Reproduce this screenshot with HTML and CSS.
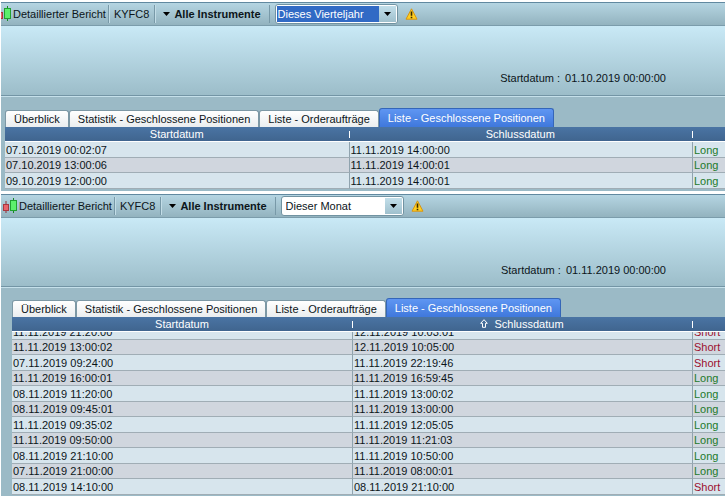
FILE: index.html
```html
<!DOCTYPE html>
<html lang="de">
<head>
<meta charset="utf-8">
<meta name="viewport" content="width=device-width, initial-scale=1">
<title>Detaillierter Bericht</title>
<link rel="stylesheet" href="styles.css">
</head>
<body>
<svg class="defs" aria-hidden="true">
  <symbol id="candles" viewBox="0 0 16 16">
    <path d="M4 3v12" stroke="#8c3038"/>
    <rect x="1.5" y="6.500" width="5" height="6" fill="#e8646c" stroke="#a83840"/>
    <path d="M11.500 0v15" stroke="#168a24"/>
    <rect x="8.500" y="2.500" width="6" height="10" fill="#5cf06c" stroke="#20a030"/>
  </symbol>
  <symbol id="caret" viewBox="0 0 7 4"><path d="M0 0h7L3.500 4z" fill="#000"/></symbol>
  <symbol id="warning" viewBox="0 0 12 12">
    <path d="M6 .8 11.500 11.200H.5z" fill="#ffcf20" stroke="#d89410" stroke-linejoin="round"/>
    <path d="M6 3.500v4.200M6 8.800v1.500" stroke="#3a2a00" stroke-width="1.600"/>
  </symbol>
  <symbol id="sort-up" viewBox="0 0 8 9"><path d="M4 .7 7.300 4.300H5.500v4h-3v-4H.7z" fill="none" stroke="#fff"/></symbol>
</svg>

<section class="report report-quarter">
  <header class="toolbar">
    <svg class="candles"><use href="#candles"/></svg>
    <span class="name">Detaillierter Bericht</span>
    <span class="account">KYFC8</span>
    <button class="instruments" type="button"><svg class="caret"><use href="#caret"/></svg>Alle Instrumente</button>
    <div class="period focused">
      <select aria-label="Zeitraum"><option>Dieses Vierteljahr</option><option>Dieser Monat</option></select>
      <span class="drop"><svg class="caret"><use href="#caret"/></svg></span>
    </div>
    <svg class="warning"><use href="#warning"/></svg>
  </header>
  <div class="info"><span>Startdatum :</span><span>01.10.2019 00:00:00</span></div>
  <div class="content">
    <nav class="tabs">
      <button type="button">Überblick</button>
      <button type="button">Statistik - Geschlossene Positionen</button>
      <button type="button">Liste - Orderaufträge</button>
      <button type="button" class="active">Liste - Geschlossene Positionen</button>
    </nav>
    <table>
      <thead><tr><th>Startdatum</th><th>Schlussdatum</th><th class="side"></th></tr></thead>
      <tbody>
        <tr><td>07.10.2019 00:02:07</td><td>11.11.2019 14:00:00</td><td class="long">Long</td></tr>
        <tr><td>07.10.2019 13:00:06</td><td>11.11.2019 14:00:01</td><td class="long">Long</td></tr>
        <tr><td>09.10.2019 12:00:00</td><td>11.11.2019 14:00:01</td><td class="long">Long</td></tr>
      </tbody>
    </table>
  </div>
</section>

<section class="report report-month">
  <header class="toolbar">
    <svg class="candles"><use href="#candles"/></svg>
    <span class="name">Detaillierter Bericht</span>
    <span class="account">KYFC8</span>
    <button class="instruments" type="button"><svg class="caret"><use href="#caret"/></svg>Alle Instrumente</button>
    <div class="period">
      <select aria-label="Zeitraum"><option>Dieser Monat</option><option>Dieses Vierteljahr</option></select>
      <span class="drop"><svg class="caret"><use href="#caret"/></svg></span>
    </div>
    <svg class="warning"><use href="#warning"/></svg>
  </header>
  <div class="info"><span>Startdatum :</span><span>01.11.2019 00:00:00</span></div>
  <div class="content">
    <nav class="tabs">
      <button type="button">Überblick</button>
      <button type="button">Statistik - Geschlossene Positionen</button>
      <button type="button">Liste - Orderaufträge</button>
      <button type="button" class="active">Liste - Geschlossene Positionen</button>
    </nav>
    <table>
      <thead><tr><th>Startdatum</th><th><svg class="sort"><use href="#sort-up"/></svg>Schlussdatum</th><th class="side"></th></tr></thead>
      <tbody>
        <tr class="scrolled"><td><div>11.11.2019 21:20:00</div></td><td><div>12.11.2019 10:03:01</div></td><td class="short"><div>Short</div></td></tr>
        <tr><td>11.11.2019 13:00:02</td><td>12.11.2019 10:05:00</td><td class="short">Short</td></tr>
        <tr><td>07.11.2019 09:24:00</td><td>11.11.2019 22:19:46</td><td class="short">Short</td></tr>
        <tr><td>11.11.2019 16:00:01</td><td>11.11.2019 16:59:45</td><td class="long">Long</td></tr>
        <tr><td>08.11.2019 11:20:00</td><td>11.11.2019 13:00:02</td><td class="long">Long</td></tr>
        <tr><td>08.11.2019 09:45:01</td><td>11.11.2019 13:00:00</td><td class="long">Long</td></tr>
        <tr><td>11.11.2019 09:35:02</td><td>11.11.2019 12:05:05</td><td class="long">Long</td></tr>
        <tr><td>11.11.2019 09:50:00</td><td>11.11.2019 11:21:03</td><td class="long">Long</td></tr>
        <tr><td>08.11.2019 21:10:00</td><td>11.11.2019 10:50:00</td><td class="long">Long</td></tr>
        <tr><td>07.11.2019 21:00:00</td><td>11.11.2019 08:00:01</td><td class="long">Long</td></tr>
        <tr><td>08.11.2019 14:10:00</td><td>08.11.2019 21:10:00</td><td class="short">Short</td></tr>
      </tbody>
    </table>
  </div>
</section>
</body>
</html>
```
FILE: styles.css
```css
* { box-sizing: border-box; }

body {
  margin: 0;
  padding: 2px 0 0 1px;
  background: #fff;
  color: #0c151a;
  font: 11px/14px "Liberation Sans", Arial, sans-serif;
}

button, select { font: inherit; color: inherit; }
svg { display: block; flex: none; }
.defs { position: absolute; width: 0; height: 0; }

.report { overflow: hidden; background: #9bbac6; }
.report-month { margin-top: 3px; }

.toolbar {
  display: flex;
  align-items: center;
  height: 24px;
  border-top: 1px solid #6189a0;
  border-bottom: 1px solid #7b9cab;
  background: linear-gradient(#b5d5e2, #93b3bf);
}
.report-quarter .candles { margin-left: -5px; }
.report-month .candles { margin-left: 1px; }
.candles { width: 16px; height: 16px; }
.name { padding: 2px 2px 2px 1px; }
.account { padding: 2px 5px; }
.account, .instruments {
  border: 0;
  border-left: 1px solid #7899a8;
  box-shadow: inset 1px 0 #c3dde7;
}
.instruments {
  display: flex;
  align-items: center;
  gap: 4px;
  padding: 2px 8px;
  border-right: 1px solid #7899a8;
  background: none;
  font-weight: bold;
}
.caret { width: 7px; height: 4px; }

.period {
  display: grid;
  grid-template-columns: 1fr 17px;
  width: 123px;
  height: 20px;
  margin-left: 5px;
  padding: 1px;
  border: 1px solid #7193a2;
  border-radius: 3px;
  background: #fff;
}
.period select {
  grid-area: 1 / 1 / 2 / 3;
  width: 100%;
  padding: 0 18px 0 3px;
  border: 0;
  background: transparent;
  appearance: none;
}
.drop {
  grid-area: 1 / 2;
  display: grid;
  place-items: center;
  background: linear-gradient(#c3dfea, #9fc0cd);
  pointer-events: none;
}
.focused select { background: #316ac5; color: #fff; padding-left: 1px; }
.warning { width: 13px; height: 12px; margin-left: 7px; }

.info {
  display: flex;
  justify-content: flex-end;
  gap: 5px;
  height: 70px;
  padding: 45px 59px 0 0;
  border-bottom: 1px solid #7395a5;
  background: linear-gradient(#c9e9f6, #9cbdc9);
}
.report-month .info { height: 69px; }

.content { padding: 11px 0 2px 4px; border-top: 1px solid #c5e0ea; }
.report-month .content { padding: 10px 0 2px 11px; }

.tabs { display: flex; align-items: flex-end; height: 19px; }
.tabs button {
  height: 17px;
  padding: 0 8px;
  border: 1px solid #7d98a5;
  border-bottom: 0;
  border-radius: 3px 3px 0 0;
  background: linear-gradient(#fff, #eaedef);
  line-height: 16px;
  white-space: nowrap;
}
.tabs .active {
  height: 19px;
  border-color: #3566b8;
  background: linear-gradient(#5f96f2, #3f78dc);
  color: #fff;
}

table { width: 100%; border-collapse: separate; border-spacing: 0; table-layout: fixed; }
th {
  height: 15px;
  padding: 0;
  border-bottom: 1px solid #fff;
  background: linear-gradient(#4a74a4, #40658f);
  color: #fff;
  font-weight: normal;
  text-align: center;
}
th + th {
  background: linear-gradient(#fff, #fff) left center / 1px 7px no-repeat, linear-gradient(#4a74a4, #40658f);
}
.side { width: 33px; }
.sort { display: inline-block; width: 8px; height: 9px; margin-right: 6px; }
td {
  height: 16px;
  padding: 0 0 0 1px;
  border-bottom: 1px solid #a0adb5;
  background: #d7e5ed;
  white-space: nowrap;
}
tr:nth-child(even) td { height: 15px; background: #d0d6de; }
td + td { border-left: 1px solid #8fa3ae; }
.long { color: #1d7a2b; }
.short { color: #9c1030; }
.scrolled td { height: 8px; }
.scrolled div { display: flex; align-items: flex-end; height: 7px; overflow: hidden; }
```
